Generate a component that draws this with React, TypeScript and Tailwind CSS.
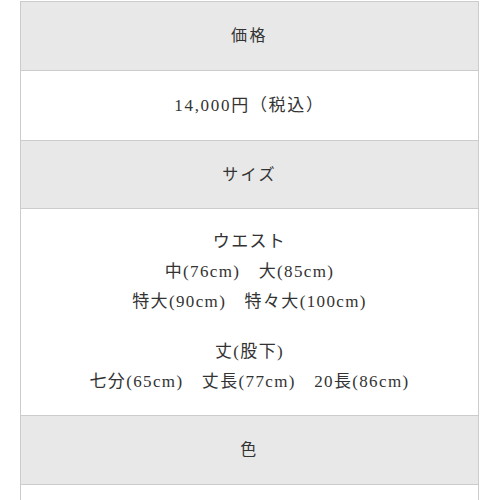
import React from "react";

const font = { fontFamily: '"Liberation Serif", "Noto Sans CJK JP", serif' };

const HeadRow = ({ label, h }: { label: string; h: string }) => (
  <div className={`flex items-center justify-center bg-[#e8e8e8] border-b border-[#cccccc] ${h}`}>
    <span className="text-[16px] tracking-[0.15em] text-[#333333]">{label}</span>
  </div>
);

const App = () => {
  return (
    <div className="w-[500px] h-[500px] overflow-hidden bg-white pt-px" style={font}>
      <div className="ml-[20px] w-[459px] border-x border-t border-[#cccccc] text-[#333333]">
        <HeadRow label="価格" h="h-[69px]" />
        <div className="flex items-center justify-center h-[70px] border-b border-[#cccccc]">
          <span className="text-[17px] tracking-[0.1em]">14,000円（税込）</span>
        </div>
        <HeadRow label="サイズ" h="h-[68px]" />
        <div className="flex flex-col items-center justify-center h-[207px] border-b border-[#cccccc] text-[17px] leading-[30px] tracking-[0.08em]">
          <p>ウエスト</p>
          <p>中(76cm)　大(85cm)</p>
          <p>特大(90cm)　特々大(100cm)</p>
          <p className="mt-[20px]">丈(股下)</p>
          <p>七分(65cm)　丈長(77cm)　20長(86cm)</p>
        </div>
        <HeadRow label="色" h="h-[69px]" />
        <div className="h-[40px]" />
      </div>
    </div>
  );
};

export default App;
